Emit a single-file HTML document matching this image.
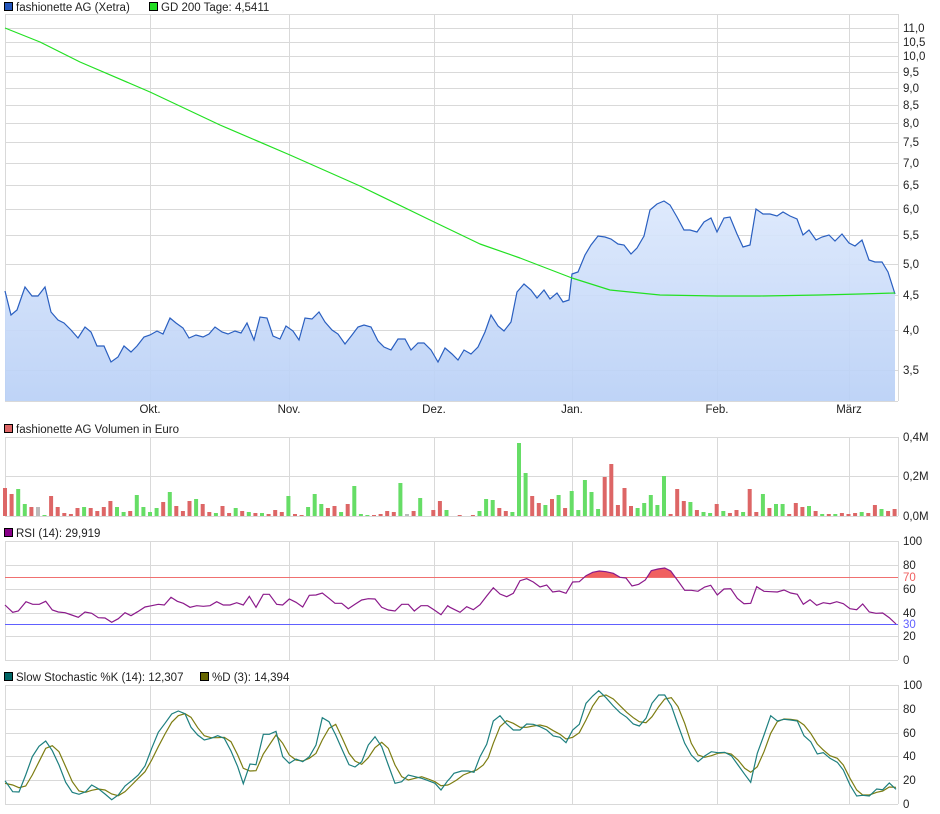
<!DOCTYPE html>
<html><head><meta charset="utf-8">
<style>
html,body{margin:0;padding:0;background:#fff;}
svg{display:block;font-family:"Liberation Sans",Arial,sans-serif;}
</style></head>
<body>
<svg id="s" width="940" height="814" viewBox="0 0 940 814" xmlns="http://www.w3.org/2000/svg">
<defs>
<linearGradient id="gf" x1="0" y1="0" x2="0" y2="1" gradientUnits="userSpaceOnUse" x1v="0">
</linearGradient>
<linearGradient id="g2" x1="0" y1="200" x2="0" y2="401" gradientUnits="userSpaceOnUse">
<stop offset="0" stop-color="#dce8fc"/><stop offset="1" stop-color="#b9d0f6"/>
</linearGradient>
</defs>
<g id="grid" stroke="#d9d9d9" stroke-width="1" fill="none"></g>
<g id="data"></g>
<g id="txt" font-size="11.5" fill="#222">
<rect x="4.5" y="2.5" width="8" height="8" fill="#2255bb" stroke="#000"/>
<text x="16" y="11">fashionette AG (Xetra)</text>
<rect x="149.5" y="2.5" width="8" height="8" fill="#22dd22" stroke="#000"/>
<text x="161" y="11">GD 200 Tage: 4,5411</text>
<rect x="4.5" y="424.5" width="8" height="8" fill="#dd6666" stroke="#000"/>
<text x="16" y="433">fashionette AG Volumen in Euro</text>
<rect x="4.5" y="528.5" width="8" height="8" fill="#880088" stroke="#000"/>
<text x="16" y="537">RSI (14): 29,919</text>
<rect x="4.5" y="672.5" width="8" height="8" fill="#006666" stroke="#000"/>
<text x="16" y="681">Slow Stochastic %K (14): 12,307</text>
<rect x="200.5" y="672.5" width="8" height="8" fill="#666600" stroke="#000"/>
<text x="212" y="681">%D (3): 14,394</text>
<g text-anchor="middle">
<text x="150" y="413">Okt.</text><text x="289" y="413">Nov.</text><text x="434" y="413">Dez.</text>
<text x="572" y="413">Jan.</text><text x="717" y="413">Feb.</text><text x="849" y="413">März</text>
</g>
<g id="ax"></g>
</g>
</svg>
<script>
var NS="http://www.w3.org/2000/svg";
function el(p,t,a){var e=document.createElementNS(NS,t);for(var k in a)e.setAttribute(k,a[k]);p.appendChild(e);return e;}
var G=document.getElementById('grid'),D=document.getElementById('data'),A=document.getElementById('ax');
var L=5,R=898,months=[150,289,434,572,717,849];
function hl(y){el(G,'line',{x1:L,x2:R,y1:y+.5,y2:y+.5});}
function vl(y1,y2){months.forEach(function(x){el(G,'line',{x1:x+.5,x2:x+.5,y1:y1,y2:y2});});
 el(G,'line',{x1:L+.5,x2:L+.5,y1:y1,y2:y2});el(G,'line',{x1:R+.5,x2:R+.5,y1:y1,y2:y2});}
function lab(y,t,c){var e=el(A,'text',{x:903,y:y+4});e.textContent=t;if(c)e.setAttribute('fill',c);}
// main
var pr=[[11,"11,0"],[10.5,"10,5"],[10,"10,0"],[9.5,"9,5"],[9,"9,0"],[8.5,"8,5"],[8,"8,0"],[7.5,"7,5"],[7,"7,0"],[6.5,"6,5"],[6,"6,0"],[5.5,"5,5"],[5,"5,0"],[4.5,"4,5"],[4,"4,0"],[3.5,"3,5"]];
hl(14);hl(401);
pr.forEach(function(p){var y=Math.round(28+(Math.log(11)-Math.log(p[0]))*298.7);hl(y);lab(y,p[1]);});
vl(14,401);
// volume
[437,476,516].forEach(hl);vl(437,516);lab(437,"0,4M");lab(476,"0,2M");lab(516,"0,0M");
// rsi
[541,565,589,613,636,660].forEach(hl);vl(541,660);
lab(541,"100");lab(565,"80");lab(589,"60");lab(613,"40");lab(636,"20");lab(660,"0");
lab(577,"70","#f06060");lab(624,"30","#6060ff");
// stoch
[685,709,733,756,780,804].forEach(hl);vl(685,804);
lab(685,"100");lab(709,"80");lab(733,"60");lab(756,"40");lab(780,"20");lab(804,"0");

function pts(a){return a.map(function(p){return p[0]+','+p[1];}).join(' ');}
var price=[[5,291],[11,315],[17,310],[25,287],[32,296],[38,296],[45,287],[51,312],[58,320],[64,323],[71,330],[78,338],[85,327],[91,332],[97,346],[104,346],[111,362],[118,357],[124,346],[131,352],[137,346],[144,337],[150,335],[157,331],[163,334],[170,318],[176,323],[183,328],[189,338],[196,335],[203,337],[209,334],[215,327],[222,332],[228,334],[235,331],[241,333],[247,323],[254,340],[260,317],[267,318],[273,336],[280,339],[286,326],[293,331],[299,340],[305,318],[312,319],[319,312],[325,322],[332,330],[338,334],[345,344],[352,335],[358,327],[364,325],[371,327],[378,341],[384,347],[391,350],[398,339],[405,339],[411,350],[418,343],[424,343],[431,350],[438,362],[445,348],[452,354],[458,360],[464,350],[471,354],[478,347],[485,332],[491,315],[498,326],[504,331],[511,322],[517,292],[524,284],[531,290],[537,298],[544,290],[550,299],[557,293],[563,302],[569,300],[572,274],[578,272],[585,255],[591,245],[598,236],[605,237],[611,239],[618,244],[624,245],[631,254],[637,248],[644,236],[650,210],[657,204],[664,201],[670,205],[677,217],[684,230],[690,230],[697,232],[704,222],[711,218],[717,232],[724,218],[730,217],[737,234],[743,247],[750,245],[756,209],[763,214],[770,214],[777,216],[783,212],[790,216],[797,219],[803,235],[809,230],[816,240],[822,237],[829,235],[835,241],[842,234],[849,243],[855,246],[862,240],[869,260],[875,262],[882,262],[888,272],[895,294]];
el(D,'polygon',{points:'5,401 '+pts(price)+' 895,401',fill:'url(#g2)','fill-opacity':'0.92'});
el(D,'polyline',{points:pts(price),fill:'none',stroke:'#2a5fc0','stroke-width':'1.2'});
var gd=[[5,28],[40,42],[80,62],[150,92],[220,125],[290,155],[360,186],[430,220],[480,244],[520,258],[572,278],[610,290],[660,295],[717,296],[760,296],[820,295],[860,294],[895,293]];
var d='M5,28';for(var i=1;i<gd.length;i++){var p0=gd[i-1],p1=gd[i];d+=' L'+p1[0]+','+p1[1];}
el(D,'path',{d:d,fill:'none',stroke:'#22e022','stroke-width':'1.2','stroke-linejoin':'round'});
// volume bars
var vA="r28 r22 g27 g12 r9 x9 g1 r20 r9 r3 r2 r8 g9 r8 r5 r9 r15 g9 g4 r5 g21 g9 g4 g8 r14 g24 r10 r5 r15 g17 r12 r4 g3 r10 r3 g8 r5 g4 r3 g3 r2 r6 r4 g20 r2";
var vB="r1 g9 g22 g12 r8 r10 g4 r12 g30 g2 g1 r1 r2 r5 r4 g33 x2 r5 g18 n0 r6 r15 g6 n0 r1 n0 r1 g5 g17 g16 r8 r5 g4 g73 g43 r20 r13 g11 r17 g21 r8 g25 g6 g36 g24 g7 r39 r52 r11 r28 r10 g8 g13 g21 g11 g40 r2 r27 r15 g14 r6 g4 g3 r12";
var vC="g5 r3 r6 g4 r27 r4 g22 r8 g12 g12 r2 r13 r9 g10 r5 g2 r2 g2 r3 r2 r3 g4 r3 r11 g7 r5 r7";
var vols=(vA+" "+vB+" "+vC).split(" ");
var col={r:'#dd6666',g:'#66dd66',x:'#bbbbbb',n:'none'};
vols.forEach(function(v,i){var h=+v.slice(1);if(!h)return;var cx=5+i*6.59;
 el(D,'rect',{x:(cx-2).toFixed(1),y:516-h,width:4,height:h,fill:col[v[0]]});});
// RSI
function cv(a,ox,oy){return a.map(function(p){return [(ox+p[0]/3).toFixed(1),(oy+p[1]/3).toFixed(1)];});}
var r1=[[15,135],[38,157],[55,153],[78,125],[98,133],[118,133],[137,124],[157,150],[175,156],[195,158],[215,165],[235,172],[255,156],[275,160],[295,173],[315,174],[335,187],[355,176],[375,158],[393,167],[413,155],[435,141],[455,137],[475,133],[493,135],[513,112],[532,124],[550,130],[570,142],[590,137],[610,139],[630,137],[650,125],[670,135],[690,135],[710,128],[730,135],[748,109],[768,142],[790,103],[808,103],[830,133],[848,135],[868,117],[888,127],[908,141],[928,106],[948,105],[967,99],[987,115],[1005,130],[1025,130],[1045,146],[1065,133],[1085,120],[1105,116],[1125,117],[1145,142],[1165,150],[1185,153],[1205,133],[1225,133],[1243,153],[1263,137],[1283,137],[1303,150],[1323,164],[1343,137]];
var r2=[[0,142],[30,157],[50,140],[70,149],[90,134],[110,108],[130,83],[150,102],[170,110],[190,100],[210,62],[230,56],[250,66],[270,81],[290,75],[308,96],[328,93],[348,100],[368,66],[388,65],[408,47],[428,37],[448,33],[468,35],[490,40],[510,52],[528,54],[546,78],[566,73],[586,60],[604,32],[624,27],[644,24],[662,33],[682,60],[704,91],[724,91],[744,94],[764,81],[782,76],[802,105],[822,87],[842,86],[862,115],[882,131],[902,130],[920,80],[942,94],[962,95],[982,96],[1002,90],[1022,99],[1042,103],[1060,133],[1080,119],[1100,136],[1120,128],[1140,131],[1160,125],[1180,131],[1200,146],[1220,149],[1238,132],[1258,156],[1278,160],[1298,159],[1318,173],[1338,192]];
var rsi=cv(r1,0,560).concat(cv(r2,450,560));
// overbought fill
var g=el(D,'g',{});
var cp=el(D,'clipPath',{id:'ob'});el(cp,'rect',{x:0,y:0,width:940,height:577});
el(D,'polygon',{points:'0,577 '+pts(rsi)+' 900,577',fill:'#f06060','clip-path':'url(#ob)'});
el(D,'line',{x1:L,x2:R,y1:577.5,y2:577.5,stroke:'#f07070'});
el(D,'line',{x1:L,x2:R,y1:624.5,y2:624.5,stroke:'#6060ff'});
el(D,'polyline',{points:pts(rsi),fill:'none',stroke:'#8b1a8b','stroke-width':'1.2'});
// stoch
var k1=[[15,287],[38,320],[57,321],[77,270],[97,215],[117,184],[137,168],[157,197],[177,240],[197,292],[217,322],[237,328],[257,320],[275,300],[295,311],[315,327],[335,344],[355,330],[375,303],[395,287],[415,270],[435,243],[455,190],[475,142],[495,115],[515,87],[535,78],[555,86],[573,127],[593,150],[613,165],[633,160],[653,152],[673,160],[693,198],[713,245],[730,296],[750,237],[768,239],[790,148],[808,148],[828,139],[848,215],[868,235],[888,222],[908,230],[928,215],[948,180],[967,98],[987,110],[1007,150],[1027,195],[1047,239],[1065,246],[1085,230],[1105,180],[1125,155],[1145,185],[1165,240],[1185,295],[1205,290],[1225,270],[1245,275],[1265,280],[1285,287],[1305,295],[1323,315],[1343,287]];
var d1=[[15,295],[38,300],[57,308],[77,303],[97,270],[117,230],[137,190],[157,182],[177,200],[197,245],[217,290],[237,318],[257,322],[275,316],[295,312],[315,315],[335,327],[355,332],[375,320],[395,300],[415,280],[435,260],[455,225],[475,185],[495,147],[515,112],[535,92],[555,86],[573,97],[593,128],[613,152],[633,158],[653,158],[673,157],[693,170],[713,210],[730,250],[750,258],[768,257],[790,207],[808,180],[828,150],[848,175],[868,210],[888,225],[908,228],[928,220],[948,205],[967,165],[987,130],[1007,118],[1027,160],[1047,205],[1065,228],[1085,238],[1105,218],[1125,188],[1145,172],[1165,190],[1185,240],[1205,275],[1225,285],[1245,280],[1265,275],[1285,282],[1305,290],[1323,302],[1343,300]];
var k2=[[0,280],[12,265],[35,258],[55,258],[72,262],[90,215],[110,178],[130,108],[150,92],[170,117],[190,135],[210,135],[230,117],[250,118],[270,125],[290,135],[310,153],[330,157],[348,173],[368,135],[388,118],[408,55],[428,33],[446,17],[468,38],[490,63],[510,83],[530,97],[550,117],[568,123],[588,100],[606,55],[626,30],[644,30],[664,62],[684,120],[704,175],[724,210],[744,230],[764,213],[784,200],[804,203],[824,202],[844,212],[864,240],[884,268],[902,292],[922,205],[942,150],[962,92],[982,108],[1002,103],[1022,105],[1042,108],[1062,152],[1082,170],[1102,207],[1120,203],[1140,220],[1162,232],[1180,255],[1200,300],[1220,333],[1238,331],[1258,333],[1280,312],[1298,314],[1318,294],[1338,313]];
var d2=[[0,297],[20,285],[40,270],[60,262],[80,255],[100,240],[115,218],[130,175],[150,125],[170,107],[190,115],[210,127],[230,127],[250,123],[270,120],[290,125],[310,137],[330,148],[348,162],[368,157],[388,143],[408,105],[428,63],[448,35],[468,30],[490,42],[510,62],[530,82],[550,98],[568,110],[588,113],[606,95],[626,65],[644,42],[664,38],[684,65],[704,115],[724,175],[744,210],[764,217],[784,212],[804,205],[824,203],[844,207],[864,225],[884,250],[902,262],[922,245],[942,200],[962,145],[982,110],[1002,102],[1022,103],[1042,106],[1062,120],[1082,145],[1102,177],[1120,195],[1140,212],[1162,220],[1180,240],[1200,280],[1220,315],[1238,330],[1258,330],[1280,322],[1298,318],[1318,306],[1338,307]];
el(D,'polyline',{points:pts(cv(d1,0,685).concat(cv(d2,450,685))),fill:'none',stroke:'#7d7d12','stroke-width':'1.2'});
el(D,'polyline',{points:pts(cv(k1,0,685).concat(cv(k2,450,685))),fill:'none',stroke:'#1d7f7f','stroke-width':'1.2'});
</script>
</body></html>
